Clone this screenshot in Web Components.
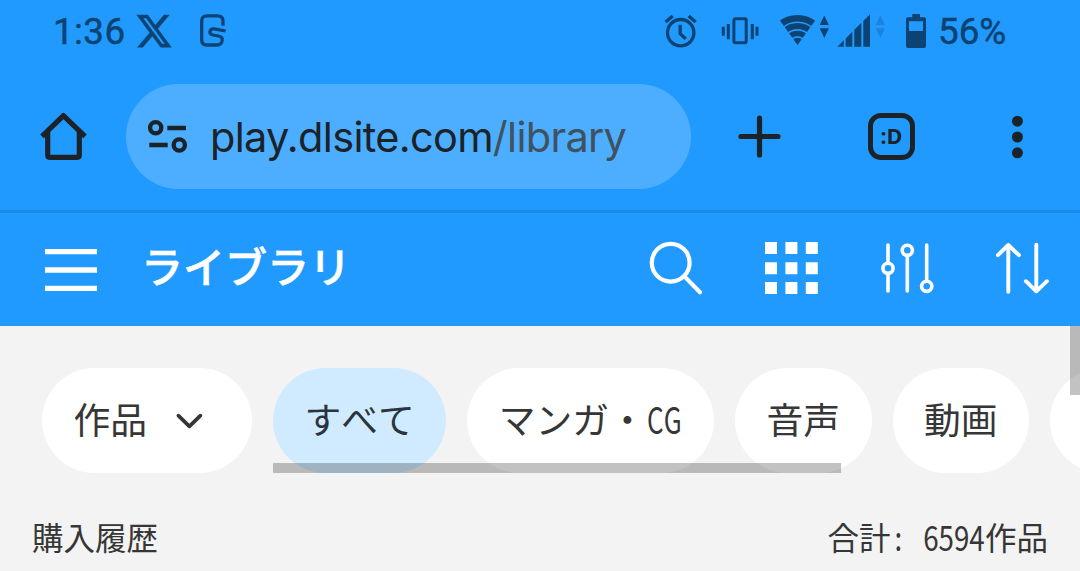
<!DOCTYPE html>
<html lang="ja">
<head>
<meta charset="utf-8">
<title>ライブラリ</title>
<style>
 body {
  margin: 0;
  width: 1080px;
  height: 571px;
  overflow: hidden;
  font-family: "Noto Sans CJK JP", sans-serif;
  font-kerning: none;
  --Primary: #209aff;
  --PrimaryLine: #1b8beb;
  --UrlBox: #4daeff;
  --OnStatus: #0c4372;
  --OnBrowser: #1b2329;
  --OnUrlPath: #40515f;
  --Surface: #f3f3f3;
  --OnSurface: #363636;
  --ChipSelected: #d0eaff;
  --Scroll: rgba(0, 0, 0, 0.24);
 }
</style>
</head>
<body>
<library-page></library-page>

<script>
/** Each icon: width, height, markup. */
const ICONS = {
 x: [36, 34,
  `<path transform="translate(-1.2 -2.8) scale(1.6 1.66)" fill="currentColor" stroke="currentColor" stroke-width="0.25" d="M18.244 2.25h3.308l-7.227 8.26 8.502 11.24H16.17l-5.214-6.817L4.99 21.75H1.68l7.73-8.835L1.254 2.25H8.08l4.713 6.231zm-1.161 17.52h1.833L7.084 4.126H5.117z"/>`],
 sumo: [28, 34,
  `<path fill="none" stroke="currentColor" stroke-width="3.3" d="M24 11.7V7q0-5.2-5.2-5.2H8Q2.7 1.8 2.7 7v18.7q0 5.3 5.3 5.3h10q4.6 0 5.2-4.6.5-3.6-3.9-4.4l-5.3-1q-3.6-.9-3-3.6.7-3 4.2-2.5L26.6 17"/>`],
 alarm: [33, 34,
  `<g fill="none" stroke="currentColor" stroke-width="3.3">
    <circle cx="16.7" cy="18.7" r="13.2"/>
    <path d="M1.6 8 8.7 2M24.7 2l7 6M16.2 10.7v9l5.6 5.2"/>
   </g>`],
 vibrate: [38, 30,
  `<g fill="none" stroke="currentColor" stroke-width="3">
    <rect x="12.9" y="2.8" width="12.3" height="23.9" rx="1.5"/>
    <path d="M7.3 8v15.3M2.3 10.7v9M31.3 8v15.3M36 10.7v9"/>
   </g>`],
 wifi: [38, 32,
  `<clipPath id="fan"><path d="M18.5 31-3.1 1V0h43.2v1z"/></clipPath>
   <g clip-path="url(#fan)" fill="none" stroke="currentColor">
    <circle cx="18.5" cy="31" r="26.8" stroke-width="6.6"/>
    <circle cx="18.5" cy="31" r="18.9" stroke-width="6"/>
    <circle cx="18.5" cy="31" r="11.6" stroke-width="5.4"/>
    <circle cx="18.5" cy="31" r="3.6" stroke-width="7.2"/>
   </g>`],
 traffic: [11, 26,
  `<path fill="currentColor" d="M5.3 1.5 9.9 11H.7zM.7 14.3h9.2L5.3 24z"/>`],
 signal: [34, 34,
  `<path fill="currentColor" d="M.3 32.7 6.8 26.2v6.5zM8.7 24.4l6.6-6.6v14.9H8.7zM17.3 15.8l7-7v23.9h-7zM26.3 6.9 33 .3v32.4h-6.7z"/>`],
 battery: [22, 36,
  `<path fill="currentColor" fill-rule="evenodd" d="M7.3 1H15v3.3h4q2 0 2 2V33q0 2-2 2H3q-2 0-2-2V6.3q0-2 2-2h4.3zM4 8.2V18h14V8.2z"/>`],
 home: [50, 49,
  `<path fill="none" stroke="currentColor" stroke-width="5.2" stroke-linejoin="round" d="M3 24.3 24.4 3.6 46 24.3M8.7 19v24.3q0 2 2 2h27.6q2 0 2-2V19"/>`],
 tune: [42, 36,
  `<g fill="none" stroke="currentColor" stroke-width="4.4">
    <circle cx="8.7" cy="8.7" r="5.6"/>
    <circle cx="32.3" cy="26" r="5.6"/>
    <path d="M20.3 9H39M2.3 26h18.4"/>
   </g>`],
 plus: [43, 43,
  `<path stroke="currentColor" stroke-width="5.2" stroke-linecap="round" d="M21.5 3v37M3 21.5h37"/>`],
 dots: [12, 44,
  `<g fill="currentColor"><circle cx="6.4" cy="6.2" r="5.5"/><circle cx="6.4" cy="22" r="5.5"/><circle cx="6.4" cy="37.8" r="5.5"/></g>`],
 menu: [52, 42,
  `<path stroke="currentColor" stroke-width="5.3" d="M0 2.7h52M0 21h52M0 39.3h52"/>`],
 search: [54, 54,
  `<g fill="none" stroke="currentColor" stroke-width="4.2">
    <circle cx="21.7" cy="21.7" r="18.9"/>
    <path stroke-linecap="round" d="M35.4 35.4 51 51.3"/>
   </g>`],
 grid: [53, 52,
  `<path stroke="currentColor" stroke-width="12" stroke-dasharray="12 8.4" d="M0 6h53M0 26.2h53M0 46h53"/>`],
 sliders: [54, 52,
  `<g fill="none" stroke="currentColor" stroke-width="3.6" stroke-linecap="round">
    <path d="M8 3v18M8 31.6V49M27.3 13.6V49M46.7 3v36"/>
    <circle cx="8" cy="26.3" r="5.1"/>
    <circle cx="27.3" cy="8.3" r="5.1"/>
    <circle cx="46.7" cy="44.3" r="5.1"/>
   </g>`],
 sort: [55, 52,
  `<path fill="none" stroke="currentColor" stroke-width="3.9" stroke-linecap="round" stroke-linejoin="round" d="M13.3 49.7V3.2M2.9 13.2 13.3 3l10.6 10.2M41.3 2.8v46M30.9 39.2l10.4 10.1 10.6-10.1"/>`],
 chevron: [29, 18,
  `<path fill="none" stroke="currentColor" stroke-width="3.7" stroke-linecap="round" stroke-linejoin="round" d="M3.4 3.6l11 10.8 11-10.8"/>`]
}

class UiIcon extends HTMLElement {
 connectedCallback() {
  const [w, h, markup] =
   ICONS[this.getAttribute("name")]
  this.attachShadow({ mode: "open" })
   .innerHTML = /* html */
   `<style>
    :host {
     display: block;
     flex: none;
     width: ${w}px;
     height: ${h}px;
    }
    svg { display: block; }
   </style>
   <svg width="${w}" height="${h}"
     viewBox="0 0 ${w} ${h}">${markup}</svg>`
 }
}
customElements.define("ui-icon", UiIcon)

/** Text squeezed to half an em per character. */
class HalfWidth extends HTMLElement {
 connectedCallback() {
  this.attachShadow({ mode: "open" })
   .innerHTML = /* html */
   `<style>
    :host {
     display: inline-flex;
     justify-content: center;
     width: calc(${this.textContent.length} * 0.5em);
     white-space: pre;
    }
    span {
     flex: none;
     transform: scale(var(--SqueezeX, 0.88), var(--SqueezeY, 1.07));
    }
   </style>
   <span><slot></slot></span>`
 }
}
customElements.define("half-width", HalfWidth)

class StatusBar extends HTMLElement {
 constructor() {
  super()
  this.attachShadow({ mode: "open" })
   .innerHTML = /* html */
   `<style>
    :host {
     display: flex;
     justify-content: space-between;
     box-sizing: border-box;
     height: 63px;
     padding: 0 75px 0 53px;
     background-color: var(--Primary);
     color: var(--OnStatus);
     font: 400 36.75px/62px Roboto, sans-serif;
     -webkit-text-stroke: 0.5px;
    }
    div {
     display: flex;
     align-items: center;
     height: 62px;
    }
    .time {
     width: 83px;
     padding-top: 2px;
     letter-spacing: 0.4px;
    }
    .sumo { margin-left: 27px; }
    .vibrate { margin-left: 24px; }
    .wifi { margin: -2px 2px 0 20px; }
    .arrows { margin-top: -8px; }
    .signal { margin-left: 7px; }
    .faint { margin-left: 4px; opacity: 0.25; }
    .battery { margin: 0 11px 0 19px; }
    .level { width: 67px; padding-top: 1px; }
   </style>
   <div>
    <span class="time">1:36</span>
    <ui-icon name="x"></ui-icon>
    <ui-icon class="sumo" name="sumo"></ui-icon>
   </div>
   <div>
    <ui-icon name="alarm"></ui-icon>
    <ui-icon class="vibrate" name="vibrate"></ui-icon>
    <ui-icon class="wifi" name="wifi"></ui-icon>
    <ui-icon class="arrows" name="traffic"></ui-icon>
    <ui-icon class="signal" name="signal"></ui-icon>
    <ui-icon class="arrows faint" name="traffic"></ui-icon>
    <ui-icon class="battery" name="battery"></ui-icon>
    <span class="level">56%</span>
   </div>`
 }
}
customElements.define("status-bar", StatusBar)

class BrowserBar extends HTMLElement {
 constructor() {
  super()
  this.attachShadow({ mode: "open" })
   .innerHTML = /* html */
   `<style>
    :host {
     display: flex;
     align-items: center;
     box-sizing: content-box;
     height: 147px;
     padding: 0 57px 0 39px;
     border-bottom: 3px solid var(--PrimaryLine);
     background-color: var(--Primary);
     color: var(--OnBrowser);
    }
    .url {
     display: flex;
     align-items: center;
     box-sizing: border-box;
     width: 565px;
     height: 105px;
     margin: 0 47px 0 37px;
     padding-left: 21px;
     border-radius: 52.5px;
     background-color: var(--UrlBox);
     font: 400 41.5px/103px Inter, sans-serif;
     letter-spacing: -0.7px;
     white-space: nowrap;
    }
    .url ui-icon { margin-right: 21px; }
    .text { padding-top: 2px; }
    .path { color: var(--OnUrlPath); }
    .tabs {
     box-sizing: border-box;
     width: 47px;
     height: 47px;
     margin: 0 96px 0 87px;
     border: 5px solid;
     border-radius: 13px;
     font: 700 21.5px/36px "Open Sans", sans-serif;
     text-align: center;
    }
   </style>
   <ui-icon name="home"></ui-icon>
   <div class="url">
    <ui-icon name="tune"></ui-icon>
    <span class="text">play.dlsite.com<span class="path">/library</span></span>
   </div>
   <ui-icon name="plus"></ui-icon>
   <div class="tabs">:D</div>
   <ui-icon name="dots"></ui-icon>`
 }
}
customElements.define("browser-bar", BrowserBar)

class AppHeader extends HTMLElement {
 constructor() {
  super()
  this.attachShadow({ mode: "open" })
   .innerHTML = /* html */
   `<style>
    :host {
     display: flex;
     align-items: center;
     box-sizing: border-box;
     height: 113px;
     padding: 0 30px 3px 45px;
     background-color: var(--Primary);
     color: #fff;
    }
    .menu { margin-top: 3px; }
    h1 {
     flex: 1;
     margin: 0 0 6px 44px;
     font-size: 42px;
     font-weight: 500;
     line-height: 60px;
     -webkit-text-stroke: 0.6px;
    }
    nav {
     display: flex;
     align-items: center;
     gap: 62px;
    }
    .sort { margin-left: -1px; }
   </style>
   <ui-icon class="menu" name="menu"></ui-icon>
   <h1><slot></slot></h1>
   <nav>
    <ui-icon name="search"></ui-icon>
    <ui-icon name="grid"></ui-icon>
    <ui-icon name="sliders"></ui-icon>
    <ui-icon class="sort" name="sort"></ui-icon>
   </nav>`
 }
}
customElements.define("app-header", AppHeader)

class FilterChip extends HTMLElement {
 constructor() {
  super()
  this.attachShadow({ mode: "open" })
   .innerHTML = /* html */
   `<style>
    :host {
     display: flex;
     flex: none;
     align-items: center;
     box-sizing: border-box;
     min-width: 136.5px;
     height: 105px;
     padding: 0 31.5px;
     border-radius: 52.5px;
     background-color: #fff;
     color: var(--OnSurface);
     font-size: 36.75px;
     line-height: 101px;
     white-space: nowrap;
    }
    :host([selected]) {
     background-color: var(--ChipSelected);
     color: #29343d;
    }
    :host([dropdown]) { padding-right: 48px; }
    span { height: 105px; }
    ui-icon { display: none; margin-left: 28px; }
    :host([dropdown]) ui-icon { display: block; }
   </style>
   <span><slot></slot></span>
   <ui-icon name="chevron"></ui-icon>`
 }
}
customElements.define("filter-chip", FilterChip)

class ChipScroller extends HTMLElement {
 constructor() {
  super()
  this.attachShadow({ mode: "open" })
   .innerHTML = /* html */
   `<style>
    :host {
     position: relative;
     display: flex;
     flex: 1;
     gap: 21px;
     min-width: 0;
     overflow: hidden;
    }
    .thumb {
     position: absolute;
     left: 0;
     bottom: 0;
     width: 568px;
     height: 10px;
     background-color: var(--Scroll);
    }
   </style>
   <slot></slot>
   <div class="thumb"></div>`
 }
}
customElements.define("chip-scroller", ChipScroller)

class LibraryPage extends HTMLElement {
 constructor() {
  super()
  this.attachShadow({ mode: "open" })
   .innerHTML = /* html */
   `<style>
    :host {
     display: block;
     height: 571px;
     background-color: var(--Surface);
    }
    main {
     position: relative;
     height: 245px;
     color: var(--OnSurface);
    }
    .filters {
     display: flex;
     gap: 21px;
     padding: 42px 0 0 42px;
    }
    .cg {
     --SqueezeX: 0.71;
     --SqueezeY: 1;
    }
    .summary {
     display: flex;
     justify-content: space-between;
     padding: 40px 32px 0 32px;
     font-size: 31.5px;
     line-height: 46px;
    }
    .scroll {
     position: absolute;
     top: 0;
     right: 0;
     width: 10px;
     height: 69px;
     background-color: var(--Scroll);
    }
   </style>
   <status-bar></status-bar>
   <browser-bar></browser-bar>
   <app-header>ライブラリ</app-header>
   <main>
    <div class="filters">
     <filter-chip dropdown>作品</filter-chip>
     <chip-scroller>
      <filter-chip selected>すべて</filter-chip>
      <filter-chip>マンガ・<half-width class="cg">CG</half-width></filter-chip>
      <filter-chip>音声</filter-chip>
      <filter-chip>動画</filter-chip>
      <filter-chip></filter-chip>
     </chip-scroller>
    </div>
    <div class="summary">
     <span>購入履歴</span>
     <span>合計<half-width>:</half-width><half-width> </half-width><half-width>6594</half-width>作品</span>
    </div>
    <div class="scroll"></div>
   </main>`
 }
}
customElements.define("library-page", LibraryPage)
</script>
</body>
</html>
